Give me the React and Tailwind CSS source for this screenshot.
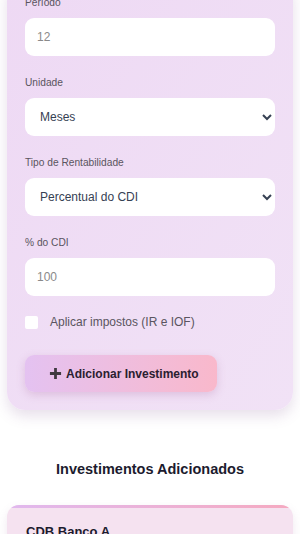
import React, { useState } from "react";

const inputCls =
  "block w-full h-[38px] rounded-[9px] bg-white px-3 text-[12px] text-gray-700 placeholder:text-[#8a8a8a] border-0 focus:outline-none";

export default function App() {
  const [taxes, setTaxes] = useState(false);

  return (
    <div className="min-h-[534px] w-[300px] overflow-hidden bg-white font-['Liberation_Sans',Arial,sans-serif]">
      <div className="px-[7px]">
        <div className="-mt-[23px] rounded-[18px] bg-gradient-to-br from-[#eed9f4] to-[#f1e2f6] px-[18px] pb-[18px] pt-[18px] shadow-[0_6px_14px_rgba(120,80,140,0.18)]">
          <label className="block text-[10.2px] leading-4 text-[#5a5560]">Período</label>
          <input className={inputCls + " mt-[7px]"} placeholder="12" />

          <label className="mt-[19px] block text-[10.2px] leading-4 text-[#5a5560]">Unidade</label>
          <select className={inputCls + " mt-[7px] pl-[11px] text-[#1f1f2a]"} defaultValue="meses">
            <option value="meses">Meses</option>
            <option value="anos">Anos</option>
          </select>

          <label className="mt-[19px] block text-[10.2px] leading-4 text-[#5a5560]">Tipo de Rentabilidade</label>
          <select className={inputCls + " mt-[7px] pl-[11px] text-[#1f1f2a]"} defaultValue="cdi">
            <option value="cdi">Percentual do CDI</option>
            <option value="pre">Prefixado</option>
          </select>

          <label className="mt-[19px] block text-[10.2px] leading-4 text-[#5a5560]">% do CDI</label>
          <input className={inputCls + " mt-[7px]"} placeholder="100" />

          <label className="mt-[17px] flex items-center gap-[12px] text-[12px] leading-[19px] text-[#5a5560]">
            <input
              type="checkbox"
              checked={taxes}
              onChange={(e) => setTaxes(e.target.checked)}
              className="h-[13px] w-[13px] appearance-none rounded-[2px] bg-white"
            />
            Aplicar impostos (IR e IOF)
          </label>

          <button className="mt-[23px] flex h-[37px] items-center gap-[4px] rounded-[9px] bg-gradient-to-r from-[#e4c2f1] to-[#f9b8cb] pl-[24px] pr-[18px] text-[12px] font-bold text-[#2a2030] shadow-[0_3px_8px_rgba(180,120,170,0.3)]">
            <svg width="13" height="13" viewBox="0 0 14 14">
              <path d="M5.5 1h3v4.5H13v3H8.5V13h-3V8.5H1v-3h4.5z" fill="#3f3a40" />
            </svg>
            Adicionar Investimento
          </button>
        </div>

        <h2 className="mt-[48px] text-center text-[14.5px] font-bold leading-[22px] text-[#1c1b2e]">
          Investimentos Adicionados
        </h2>

        <div className="mt-[25px] overflow-hidden rounded-[12px] bg-[#f5e2f0] shadow-[0_4px_10px_rgba(150,100,150,0.15)]">
          <div className="h-[3px] bg-gradient-to-r from-[#e0b8ee] to-[#f5a9c0]" />
          <div className="px-[19px] pt-[14px] pb-4">
            <div className="text-[13px] font-bold text-[#1c1b2e]">CDB Banco A</div>
          </div>
        </div>
      </div>
    </div>
  );
}
